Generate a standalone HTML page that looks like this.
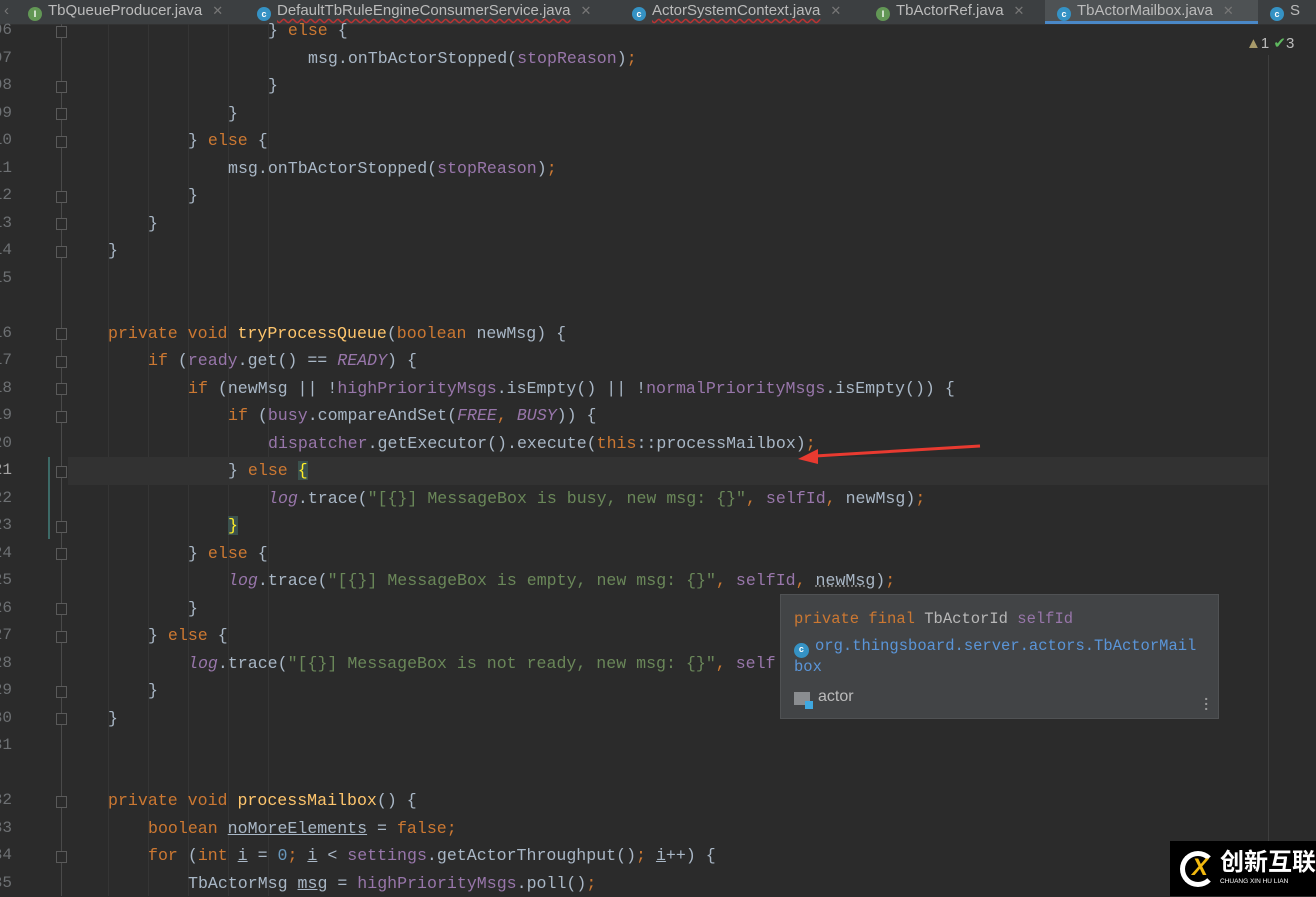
<!DOCTYPE html>
<html><head><meta charset="utf-8"><style>
body{margin:0;width:1316px;height:896px;background:#2b2b2b;overflow:hidden;position:relative;font-family:"Liberation Mono",monospace}
.tabs{position:absolute;left:0;top:0;width:1316px;height:24px;background:#3c3f41;font-family:"Liberation Sans",sans-serif;font-size:15px;color:#bbbbbb;border-bottom:1px solid #323232}
.tab{position:absolute;top:1px;height:23px;line-height:19px;white-space:nowrap}
.ic{display:inline-block;width:14px;height:14px;border-radius:50%;vertical-align:-2px;margin-right:6px;color:#fff;font-size:9px;text-align:center;line-height:14px;font-weight:bold}
.ii{background:#629755}.cc{background:#3592c4}
.x{color:#777;margin-left:10px;font-size:13px}
.ln{position:absolute;left:-8px;width:20px;text-align:right;color:#6d7073;font-size:16px;height:27.5px;line-height:27.5px}
.c{position:absolute;height:27.5px;line-height:27.5px;font-size:16.6px;color:#a9b7c6;white-space:pre}
.k{color:#cc7832}.f{color:#9876aa}.s{color:#6a8759}.m{color:#ffc66d}.i{font-style:italic}.fi{color:#9876aa;font-style:italic}
.hb{background:#3b514d;color:#ffef28}
.guide{position:absolute;top:24px;width:1px;height:872px;background:#353535}
.fold{position:absolute;left:56px;width:9px;height:10px;border:1px solid #5a5a5a;background:#2b2b2b}
</style></head><body>
<div class="tabs">
<div class="tab" style="left:4px;color:#777">&lsaquo;</div>
<div class="tab" style="left:28px"><span class="ic ii">I</span>TbQueueProducer.java<span class="x">✕</span></div>
<div class="tab" style="left:257px"><span class="ic cc">c</span><span style="text-decoration:underline wavy #b33;text-underline-offset:3px">DefaultTbRuleEngineConsumerService.java</span><span class="x">✕</span></div>
<div class="tab" style="left:632px"><span class="ic cc">c</span><span style="text-decoration:underline wavy #b33;text-underline-offset:3px">ActorSystemContext.java</span><span class="x">✕</span></div>
<div class="tab" style="left:876px"><span class="ic ii">I</span>TbActorRef.java<span class="x">✕</span></div>
<div class="tab" style="left:1045px;top:0;width:213px;background:#4e5254;padding-left:12px;padding-top:1px;box-sizing:border-box;border-bottom:3px solid #4a88c7;height:24px"><span class="ic cc">c</span>TbActorMailbox.java<span class="x">✕</span></div>
<div class="tab" style="left:1270px"><span class="ic cc">c</span>S</div>
</div>
<div style="position:absolute;left:61px;top:24px;width:1px;height:872px;background:#4a4a4a"></div>
<div style="position:absolute;left:1268px;top:55px;width:1px;height:841px;background:#3e3e3e"></div>
<div class="guide" style="left:108px"></div><div class="guide" style="left:148px"></div><div class="guide" style="left:188px"></div><div class="guide" style="left:228px"></div><div class="guide" style="left:268px"></div>
<div style="position:absolute;left:68px;top:457px;width:1200px;height:28px;background:#323232"></div>
<div style="position:absolute;left:48px;top:457px;width:2px;height:82px;background:#3d6a67"></div>
<div style="position:absolute;left:1246px;top:34px;color:#bbb;font-family:'Liberation Sans',sans-serif;font-size:15px"><span style="color:#a89a6a">▲</span>1 <span style="color:#5fb85f">✔</span>3</div>

<div class="ln" style="top:17px">06</div><div class="c" style="left:268px;top:17px">} <span class="k">else</span> {</div>
<div class="ln" style="top:44.5px">07</div><div class="c" style="left:308px;top:44.5px">msg.onTbActorStopped(<span class="f">stopReason</span>)<span class="k">;</span></div>
<div class="ln" style="top:72px">08</div><div class="c" style="left:268px;top:72px">}</div>
<div class="ln" style="top:99.5px">09</div><div class="c" style="left:228px;top:99.5px">}</div>
<div class="ln" style="top:127px">10</div><div class="c" style="left:188px;top:127px">} <span class="k">else</span> {</div>
<div class="ln" style="top:154.5px">11</div><div class="c" style="left:228px;top:154.5px">msg.onTbActorStopped(<span class="f">stopReason</span>)<span class="k">;</span></div>
<div class="ln" style="top:182px">12</div><div class="c" style="left:188px;top:182px">}</div>
<div class="ln" style="top:209.5px">13</div><div class="c" style="left:148px;top:209.5px">}</div>
<div class="ln" style="top:237px">14</div><div class="c" style="left:108px;top:237px">}</div>
<div class="ln" style="top:264.5px">15</div>
<div class="ln" style="top:319.5px">16</div><div class="c" style="left:108px;top:319.5px"><span class="k">private void </span><span class="m">tryProcessQueue</span>(<span class="k">boolean </span>newMsg) {</div>
<div class="ln" style="top:347px">17</div><div class="c" style="left:148px;top:347px"><span class="k">if </span>(<span class="f">ready</span>.get() == <span class="fi">READY</span>) {</div>
<div class="ln" style="top:374.5px">18</div><div class="c" style="left:188px;top:374.5px"><span class="k">if </span>(newMsg || !<span class="f">highPriorityMsgs</span>.isEmpty() || !<span class="f">normalPriorityMsgs</span>.isEmpty()) {</div>
<div class="ln" style="top:402px">19</div><div class="c" style="left:228px;top:402px"><span class="k">if </span>(<span class="f">busy</span>.compareAndSet(<span class="fi">FREE</span><span class="k">, </span><span class="fi">BUSY</span>)) {</div>
<div class="ln" style="top:429.5px">20</div><div class="c" style="left:268px;top:429.5px"><span class="f">dispatcher</span>.getExecutor().execute(<span class="k">this</span>::processMailbox)<span class="k">;</span></div>
<div class="ln" style="top:457px;color:#a4a3a3">21</div><div class="c" style="left:228px;top:457px">} <span class="k">else </span><span class="hb">{</span></div>
<div class="ln" style="top:484.5px">22</div><div class="c" style="left:268px;top:484.5px"><span class="fi">log</span>.trace(<span class="s">"[{}] MessageBox is busy, new msg: {}"</span><span class="k">, </span><span class="f">selfId</span><span class="k">, </span>newMsg)<span class="k">;</span></div>
<div class="ln" style="top:512px">23</div><div class="c" style="left:228px;top:512px"><span class="hb">}</span></div>
<div class="ln" style="top:539.5px">24</div><div class="c" style="left:188px;top:539.5px">} <span class="k">else</span> {</div>
<div class="ln" style="top:567px">25</div><div class="c" style="left:228px;top:567px"><span class="fi">log</span>.trace(<span class="s">"[{}] MessageBox is empty, new msg: {}"</span><span class="k">, </span><span class="f">selfId</span><span class="k">, </span><span style="text-decoration:underline dotted #888">newMsg</span>)<span class="k">;</span></div>
<div class="ln" style="top:594.5px">26</div><div class="c" style="left:188px;top:594.5px">}</div>
<div class="ln" style="top:622px">27</div><div class="c" style="left:148px;top:622px">} <span class="k">else</span> {</div>
<div class="ln" style="top:649.5px">28</div><div class="c" style="left:188px;top:649.5px"><span class="fi">log</span>.trace(<span class="s">"[{}] MessageBox is not ready, new msg: {}"</span><span class="k">, </span><span class="f">self</span></div>
<div class="ln" style="top:677px">29</div><div class="c" style="left:148px;top:677px">}</div>
<div class="ln" style="top:704.5px">30</div><div class="c" style="left:108px;top:704.5px">}</div>
<div class="ln" style="top:732px">31</div>
<div class="ln" style="top:787px">32</div><div class="c" style="left:108px;top:787px"><span class="k">private void </span><span class="m">processMailbox</span>() {</div>
<div class="ln" style="top:814.5px">33</div><div class="c" style="left:148px;top:814.5px"><span class="k">boolean </span><span style="text-decoration:underline">noMoreElements</span> = <span class="k">false;</span></div>
<div class="ln" style="top:842px">34</div><div class="c" style="left:148px;top:842px"><span class="k">for </span>(<span class="k">int </span><span style="text-decoration:underline">i</span> = <span style="color:#6897bb">0</span><span class="k">; </span><span style="text-decoration:underline">i</span> &lt; <span class="f">settings</span>.getActorThroughput()<span class="k">; </span><span style="text-decoration:underline">i</span>++) {</div>
<div class="ln" style="top:869.5px">35</div><div class="c" style="left:188px;top:869.5px">TbActorMsg <span style="text-decoration:underline">msg</span> = <span class="f">highPriorityMsgs</span>.poll()<span class="k">;</span></div>

<div class="fold" style="top:26px"></div><div class="fold" style="top:81px"></div><div class="fold" style="top:108px"></div><div class="fold" style="top:136px"></div><div class="fold" style="top:191px"></div><div class="fold" style="top:218px"></div><div class="fold" style="top:246px"></div>
<div class="fold" style="top:328px"></div><div class="fold" style="top:356px"></div><div class="fold" style="top:383px"></div><div class="fold" style="top:411px"></div><div class="fold" style="top:466px"></div><div class="fold" style="top:521px"></div><div class="fold" style="top:548px"></div><div class="fold" style="top:603px"></div><div class="fold" style="top:631px"></div><div class="fold" style="top:686px"></div><div class="fold" style="top:713px"></div><div class="fold" style="top:796px"></div><div class="fold" style="top:851px"></div>

<svg style="position:absolute;left:0;top:0" width="1316" height="896"><path d="M980 446 L815 456" stroke="#e83a30" stroke-width="3"/><path d="M798 459 L818 449 L818 464 Z" fill="#e83a30"/></svg>

<div style="position:absolute;left:780px;top:594px;width:439px;height:125px;background:#424446;border:1px solid #505254;box-sizing:border-box">
<div class="c" style="left:13px;top:11px;font-size:15.5px"><span class="k">private final </span><span style="color:#b8b8b8">TbActorId</span> <span class="f">selfId</span></div>
<div class="c" style="left:13px;top:38px;font-size:15.5px;color:#5a95d8"><span class="ic cc" style="width:15px;height:15px;margin-right:6px">c</span>org.thingsboard.server.actors.TbActorMail</div>
<div class="c" style="left:13px;top:59px;font-size:15.5px;color:#5a95d8">box</div>
<div style="position:absolute;left:13px;top:97px;width:16px;height:13px;background:#8a8d90"></div><div style="position:absolute;left:24px;top:106px;width:8px;height:8px;background:#3fa8e0"></div>
<div style="position:absolute;left:37px;top:93px;font-family:'Liberation Sans',sans-serif;font-size:16px;color:#bbb">actor</div>
<div style="position:absolute;left:421px;top:103px;color:#999;font-size:14px;line-height:5px;font-weight:bold">·<br>·<br>·</div>
</div>

<div style="position:absolute;left:1170px;top:841px;width:146px;height:55px;background:#000;font-family:'Liberation Sans','Noto Sans CJK SC',sans-serif">
<div style="position:absolute;left:10px;top:10px;width:26px;height:26px;border:5px solid #fff;border-radius:50%;border-right-color:transparent"></div>
<div style="position:absolute;left:22px;top:17px;color:#f2b90f;font-size:24px;font-weight:bold;font-style:italic;line-height:20px">X</div>
<div style="position:absolute;left:50px;top:8px;color:#fff;font-size:24px;font-weight:bold;line-height:28px">创新互联</div>
<div style="position:absolute;left:50px;top:37px;color:#fff;font-size:6.5px">CHUANG XIN HU LIAN</div>
</div>
</body></html>
